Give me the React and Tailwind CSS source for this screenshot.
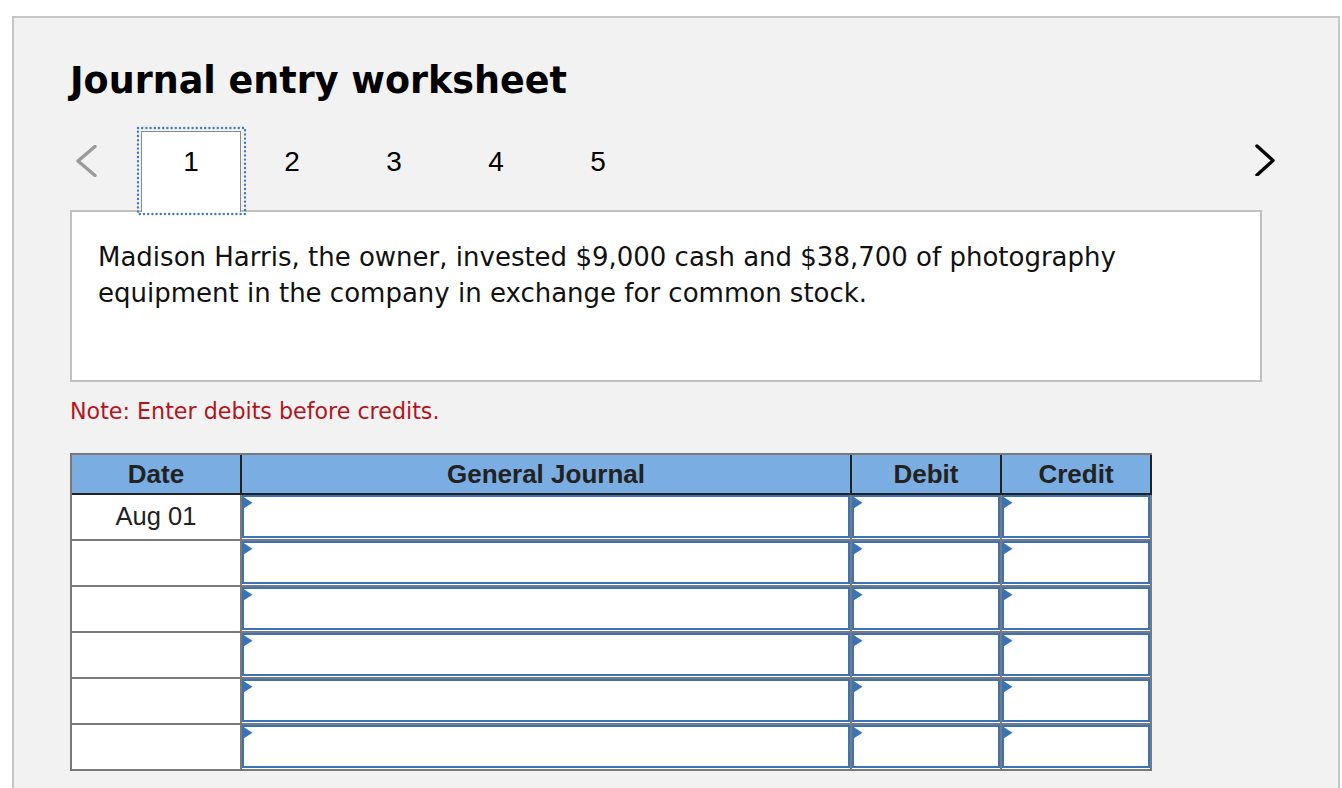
import React from "react";

const rows = [0, 1, 2, 3, 4, 5];

function Tri() {
  return (
    <svg className="absolute left-[-2px] top-[-1px]" width="11" height="14" viewBox="0 0 11 14">
      <polygon points="0,0 10.5,6.8 0,13.5" fill="#3b74b6" />
    </svg>
  );
}

function InputCell({ w }) {
  return (
    <div className={`${w} h-[46px] border-r-2 border-b-2 border-[#7a7a7a] bg-white`}>
      <div className="relative h-[43px] border-2 border-[#3b74b6] bg-white">
        <Tri />
      </div>
    </div>
  );
}

export default function App() {
  return (
    <div className="h-[788px] overflow-hidden bg-white pl-[12px] pt-[16px]">
      <div className="w-[1328px] h-[800px] border-2 border-[#c6c6c6] bg-[#f2f2f2] pl-[56px] pr-[76px] pt-[45px]">
        <h1 className="font-['DejaVu_Sans',sans-serif] text-[36.5px] leading-[36px] font-bold text-black">
          Journal entry worksheet
        </h1>

        <div className="mt-[32px] flex h-[79px] items-start font-['Liberation_Sans',Arial,sans-serif] text-[28px] leading-[27px] text-black">
          <div className="w-[71px] pl-[6px] pt-[14px]">
            <svg width="22" height="32" viewBox="0 0 22 32">
              <path d="M19 1.5 L2 16 L19 30.5" fill="none" stroke="#9a9a9a" strokeWidth="3.4" strokeLinecap="round" strokeLinejoin="round" />
            </svg>
          </div>
          <div className="relative z-10 h-[81px] w-[100px] border-t-[1.5px] border-x-[1.5px] border-[#8a8a8a] bg-white pt-[15.5px] text-center">
            <svg className="pointer-events-none absolute left-[-6.5px] top-[-6.5px]" width="111" height="90" viewBox="0 0 111 90">
              <rect x="2" y="2" width="107" height="86" fill="none" stroke="#3b7bc9" strokeWidth="2.4" strokeLinecap="round" strokeDasharray="0 4.2" />
            </svg>
            1
          </div>
          {["2", "3", "4", "5"].map((n) => (
            <div key={n} className="w-[102px] pt-[17px] text-center">
              {n}
            </div>
          ))}
          <div className="ml-auto mr-[-14px] pt-[13px]">
            <svg width="22" height="32" viewBox="0 0 22 32">
              <path d="M3 2 L19 16.5 L3 31" fill="none" stroke="#000" strokeWidth="3.4" strokeLinecap="round" strokeLinejoin="round" />
            </svg>
          </div>
        </div>

        <div className="h-[172px] border-2 border-[#c0c0c0] bg-white pl-[26px] pr-[20px] pt-[27px] font-['DejaVu_Sans',sans-serif] text-[26px] leading-[36px] text-[#111]">
          Madison Harris, the owner, invested $9,000 cash and $38,700 of photography equipment in the company in exchange for common stock.
        </div>

        <div className="mt-[16px] font-['DejaVu_Sans',sans-serif] text-[22.2px] leading-[26px] text-[#b5141d]">
          Note: Enter debits before credits.
        </div>

        <div className="mt-[29px] w-[1082px] border-l-2 border-t-2 border-[#7a7a7a] font-['Liberation_Sans',Arial,sans-serif]">
          <div className="flex h-[40px] border-b-2 border-[#222] bg-[#7aade1] text-[26px] font-bold text-[#222]">
            <div className="flex w-[170px] items-center justify-center border-r-2 border-[#222]">Date</div>
            <div className="flex w-[610px] items-center justify-center border-r-2 border-[#222]">General Journal</div>
            <div className="flex w-[150px] items-center justify-center border-r-2 border-[#222]">Debit</div>
            <div className="flex w-[150px] items-center justify-center border-r-2 border-[#222]">Credit</div>
          </div>
          {rows.map((r) => (
            <div key={r} className="flex">
              <div className="flex h-[46px] w-[170px] items-center justify-center border-r-2 border-b-2 border-[#7a7a7a] bg-white pb-[2px] text-[25.5px] text-[#222]">
                {r === 0 ? "Aug 01" : ""}
              </div>
              <InputCell w="w-[610px]" />
              <InputCell w="w-[150px]" />
              <InputCell w="w-[150px]" />
            </div>
          ))}
        </div>
      </div>
    </div>
  );
}
